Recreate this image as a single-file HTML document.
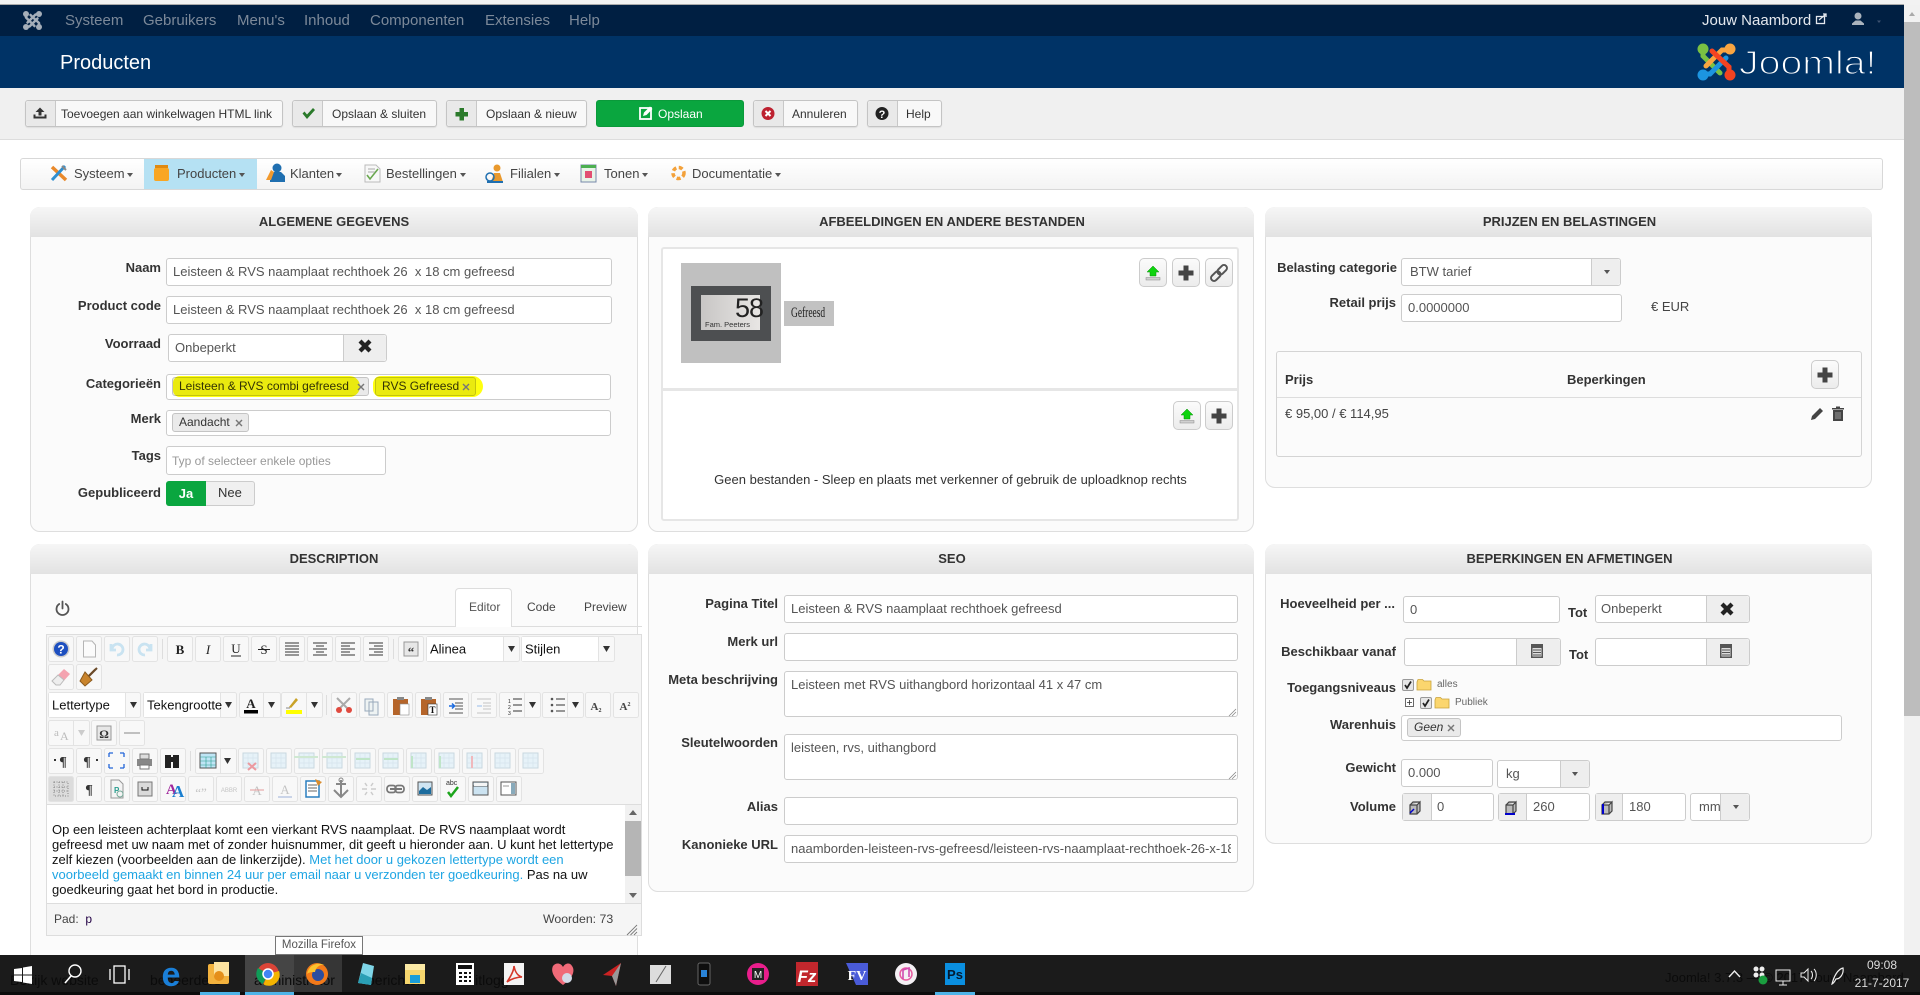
<!DOCTYPE html>
<html lang="nl"><head><meta charset="utf-8"><title>Producten</title>
<style>
html,body{margin:0;padding:0;width:1920px;height:995px;overflow:hidden;background:#fff;font-family:"Liberation Sans",Arial,sans-serif;color:#333}
#w{position:relative;width:1920px;height:995px;overflow:hidden}
.a,.t,.l,.i,.p,.b,.h,.chip{position:absolute;box-sizing:border-box}
.t,.l{white-space:pre;line-height:16px}
.l{font-weight:bold;font-size:13px;color:#333;text-align:right}
.i{background:#fff;border:1px solid #ccc;border-radius:3px}
.it{font-size:13px;color:#555;margin-top:1px}
.p{background:#fbfbfb;border:1.5px solid #dedede;border-radius:10px}
.h{left:-1px;right:-1px;top:-1px;height:30px;background:linear-gradient(#f6f6f6,#e2e2e2);border-radius:10px 10px 0 0;text-align:center;font-weight:bold;font-size:13px;line-height:29px;color:#333}
.sh{padding-left:2px}
.b{background:#f8f8f8;border:1px solid #c4c4c4;border-radius:3px;box-shadow:0 1px 1px rgba(0,0,0,.08)}
.s{position:absolute;top:0;bottom:0;left:0;background:#e9e9e9;border-right:1px solid #c8c8c8;border-radius:3px 0 0 3px}
.bt{font-size:12px;color:#333}
.tm{font-size:15px;color:#7c8999}
.m{font-size:13px;color:#444}
.ca{position:absolute;width:0;height:0;border-left:3px solid transparent;border-right:3px solid transparent;border-top:4px solid #555}
.ad{position:absolute;background:#eee;border-left:1px solid #ccc;top:0;bottom:0;right:0;border-radius:0 3px 3px 0}
.chip{background:#eaeaea;border:1px solid #c4c4c4;border-radius:3px;font-size:12px;line-height:17px;color:#333;padding-left:6px;white-space:pre}
.ib{position:absolute;background:linear-gradient(#fbfbfb,#ececec);border:1px solid #ccc;border-radius:5px;box-sizing:border-box;width:28px;height:29px}
.yl{position:absolute;background:#ffff10;mix-blend-mode:multiply}
svg{position:absolute;left:0;top:0;overflow:visible}
.gh{font-size:14px;color:#0b0b0b}
</style></head><body><div id="w">

<!-- top -->
<div class="a" style="left:0;top:0;width:1920px;height:5px;background:#f2f2f2"></div>
<div class="a" style="left:0;top:4px;width:1904px;height:32px;background:#001f42;border-top:1px solid #aaa"></div>
<div class="a" style="left:0;top:36px;width:1904px;height:52px;background:#003366"></div>
<div class="a" style="left:0;top:88px;width:1904px;height:52px;background:#f0f0f0;border-bottom:1px solid #ddd"></div>

<div class="t tm" style="left:65px;top:12px;margin-top:1px">Systeem</div>
<div class="t tm" style="left:143px;top:12px;margin-top:1px">Gebruikers</div>
<div class="t tm" style="left:237px;top:12px;margin-top:1px">Menu's</div>
<div class="t tm" style="left:304px;top:12px;margin-top:1px">Inhoud</div>
<div class="t tm" style="left:370px;top:12px;margin-top:1px">Componenten</div>
<div class="t tm" style="left:485px;top:12px;margin-top:1px">Extensies</div>
<div class="t tm" style="left:569px;top:12px;margin-top:1px">Help</div>
<div class="t" style="left:1702px;top:13px;font-size:15px;color:#e4e8ee">Jouw Naambord</div>
<div class="t" style="left:60px;top:54px;font-size:20px;color:#fff;line-height:18px">Producten</div>

<!-- toolbar -->
<div class="b" style="left:25px;top:100px;width:258px;height:27px"><div class="s" style="width:29px"></div></div>
<div class="t bt" style="left:61px;top:106px">Toevoegen aan winkelwagen HTML link</div>
<div class="b" style="left:292px;top:100px;width:145px;height:27px"><div class="s" style="width:29px"></div></div>
<div class="t bt" style="left:332px;top:106px">Opslaan &amp; sluiten</div>
<div class="b" style="left:446px;top:100px;width:141px;height:27px"><div class="s" style="width:29px"></div></div>
<div class="t bt" style="left:486px;top:106px">Opslaan &amp; nieuw</div>
<div class="a" style="left:596px;top:100px;width:148px;height:27px;background:#0aa63f;border:1px solid #0a9a3a;border-radius:3px"></div>
<div class="t bt" style="left:658px;top:106px;color:#fff">Opslaan</div>
<div class="b" style="left:753px;top:100px;width:105px;height:27px"><div class="s" style="width:29px"></div></div>
<div class="t bt" style="left:792px;top:106px">Annuleren</div>
<div class="b" style="left:867px;top:100px;width:75px;height:27px"><div class="s" style="width:29px"></div></div>
<div class="t bt" style="left:906px;top:106px">Help</div>

<!-- menu -->
<div class="a" style="left:20px;top:158px;width:1863px;height:32px;background:linear-gradient(#fff,#f3f3f3);border:1px solid #d8d8d8;border-radius:3px"></div>
<div class="a" style="left:144px;top:159px;width:113px;height:30px;background:#b5e1f3"></div>
<div class="t m" style="left:74px;top:166px">Systeem</div><div class="ca" style="left:127px;top:173px"></div>
<div class="t m" style="left:177px;top:166px">Producten</div><div class="ca" style="left:239px;top:173px"></div>
<div class="t m" style="left:290px;top:166px">Klanten</div><div class="ca" style="left:336px;top:173px"></div>
<div class="t m" style="left:386px;top:166px">Bestellingen</div><div class="ca" style="left:460px;top:173px"></div>
<div class="t m" style="left:510px;top:166px">Filialen</div><div class="ca" style="left:554px;top:173px"></div>
<div class="t m" style="left:604px;top:166px">Tonen</div><div class="ca" style="left:642px;top:173px"></div>
<div class="t m" style="left:692px;top:166px">Documentatie</div><div class="ca" style="left:775px;top:173px"></div>

<!-- panel 1 -->
<div class="p" style="left:30px;top:207px;width:608px;height:325px"><div class="h">ALGEMENE GEGEVENS</div></div>
<div class="l" style="right:1759px;top:260px">Naam</div>
<div class="i" style="left:166px;top:258px;width:446px;height:28px"></div>
<div class="t it" style="left:173px;top:263px">Leisteen &amp; RVS naamplaat rechthoek 26  x 18 cm gefreesd</div>
<div class="l" style="right:1759px;top:298px">Product code</div>
<div class="i" style="left:166px;top:296px;width:446px;height:28px"></div>
<div class="t it" style="left:173px;top:301px">Leisteen &amp; RVS naamplaat rechthoek 26  x 18 cm gefreesd</div>
<div class="l" style="right:1759px;top:336px">Voorraad</div>
<div class="i" style="left:168px;top:334px;width:219px;height:28px"><div class="ad" style="width:42px"></div></div>
<div class="t it" style="left:175px;top:339px">Onbeperkt</div>
<div class="l" style="right:1759px;top:376px">Categorieën</div>
<div class="i" style="left:166px;top:374px;width:445px;height:26px"></div>
<div class="chip" style="left:172px;top:377px;width:197px;height:19px">Leisteen &amp; RVS combi gefreesd</div>
<div class="chip" style="left:375px;top:377px;width:101px;height:19px">RVS Gefreesd</div>
<div class="yl" style="left:173px;top:376px;width:187px;height:21px;border-radius:9px 14px 14px 9px"></div>
<div class="yl" style="left:373px;top:376px;width:110px;height:21px;border-radius:9px 12px 12px 9px"></div>
<div class="l" style="right:1759px;top:411px">Merk</div>
<div class="i" style="left:166px;top:410px;width:445px;height:26px"></div>
<div class="chip" style="left:172px;top:413px;width:77px;height:19px">Aandacht</div>
<div class="l" style="right:1759px;top:448px">Tags</div>
<div class="i" style="left:166px;top:446px;width:220px;height:29px"></div>
<div class="t" style="left:172px;top:453px;font-size:12px;color:#999">Typ of selecteer enkele opties</div>
<div class="l" style="right:1759px;top:485px">Gepubliceerd</div>
<div class="a" style="left:166px;top:481px;width:89px;height:25px;background:#f0f0f0;border:1px solid #ccc;border-radius:3px"></div>
<div class="a" style="left:166px;top:481px;width:40px;height:25px;background:#0aa63f;border-radius:3px 0 0 3px;color:#fff;font-weight:bold;font-size:13px;line-height:25px;text-align:center">Ja</div>
<div class="t" style="left:218px;top:485px;font-size:13px">Nee</div>

<!-- panel 2 -->
<div class="p" style="left:648px;top:207px;width:606px;height:325px"><div class="h sh">AFBEELDINGEN EN ANDERE BESTANDEN</div></div>
<div class="a" style="left:661px;top:247px;width:578px;height:274px;background:#fff;border:2px solid #e6e6e6;border-radius:3px"></div>
<div class="a" style="left:662px;top:388px;width:576px;height:3px;background:#e6e6e6"></div>
<div class="a" style="left:681px;top:263px;width:100px;height:100px;background:#c0c0c0"></div>
<div class="a" style="left:691px;top:286px;width:80px;height:55px;background:#4d4f51"></div>
<div class="a" style="left:701px;top:295px;width:59px;height:35px;background:linear-gradient(90deg,#c8c6c5,#e8e6e4)"></div>
<div class="t" style="left:735px;top:297px;font-size:27px;line-height:22px;color:#222;letter-spacing:-1px">58</div>
<div class="t" style="left:705px;top:320px;font-size:7.5px;line-height:10px;color:#333">Fam. Peeters</div>
<div class="a" style="left:784px;top:301px;width:50px;height:25px;background:#c2c2c2"></div>
<div class="t" style="left:791px;top:305px;font-size:15px;font-family:'Liberation Serif',serif;line-height:16px;color:#222;transform:scaleX(.63);transform-origin:left">Gefreesd</div>
<div class="ib" style="left:1139px;top:258px"></div><div class="ib" style="left:1172px;top:258px"></div><div class="ib" style="left:1205px;top:258px"></div>
<div class="ib" style="left:1173px;top:401px"></div><div class="ib" style="left:1205px;top:401px"></div>
<div class="t" style="left:714px;top:472px;font-size:13px;color:#333;width:473px;text-align:center">Geen bestanden - Sleep en plaats met verkenner of gebruik de uploadknop rechts</div>

<!-- panel 3 -->
<div class="p" style="left:1265px;top:207px;width:607px;height:281px"><div class="h sh">PRIJZEN EN BELASTINGEN</div></div>
<div class="l" style="right:523px;top:260px">Belasting categorie</div>
<div class="i" style="left:1401px;top:258px;width:220px;height:28px"><div class="ad" style="width:28px"></div></div>
<div class="t it" style="left:1410px;top:263px">BTW tarief</div><div class="ca" style="left:1604px;top:270px"></div>
<div class="l" style="right:524px;top:295px">Retail prijs</div>
<div class="i" style="left:1401px;top:294px;width:221px;height:28px"></div>
<div class="t it" style="left:1408px;top:299px">0.0000000</div>
<div class="t" style="left:1651px;top:299px;font-size:13px;color:#444">€ EUR</div>
<div class="a" style="left:1276px;top:351px;width:586px;height:106px;border:1px solid #d4d4d4;border-radius:3px"></div>
<div class="a" style="left:1277px;top:397px;width:584px;height:1px;background:#ddd"></div>
<div class="t" style="left:1285px;top:372px;font-size:13px;font-weight:bold">Prijs</div>
<div class="t" style="left:1567px;top:372px;font-size:13px;font-weight:bold">Beperkingen</div>
<div class="ib" style="left:1811px;top:360px"></div>
<div class="t" style="left:1285px;top:406px;font-size:13px;color:#444">€ 95,00 / € 114,95</div>

<!-- panel 4 -->
<div class="p" style="left:30px;top:544px;width:608px;height:440px"><div class="h">DESCRIPTION</div></div>
<div class="a" style="left:46px;top:626px;width:596px;height:1px;background:#ddd"></div>
<div class="a" style="left:455px;top:588px;width:57px;height:39px;background:#fff;border:1px solid #ddd;border-bottom:0;border-radius:4px 4px 0 0"></div>
<div class="t" style="left:469px;top:599px;font-size:12px;color:#555">Editor</div>
<div class="t" style="left:527px;top:599px;font-size:12px;color:#444">Code</div>
<div class="t" style="left:584px;top:599px;font-size:12px;color:#444">Preview</div>
<div class="a" style="left:46px;top:634px;width:596px;height:302px;background:#f5f5f5;border:1px solid #ddd"></div>
<div class="a" style="left:47px;top:804px;width:594px;height:100px;background:#fff;border-top:1px solid #ddd;border-bottom:1px solid #ddd"></div>
<div class="a" style="left:625px;top:805px;width:16px;height:98px;background:#f1f1f1"></div>
<div class="a" style="left:625px;top:821px;width:16px;height:55px;background:#b5b5b5"></div>
<div class="t" style="left:52px;top:822px;font-size:13px;color:#111">Op een leisteen achterplaat komt een vierkant RVS naamplaat. De RVS naamplaat wordt</div>
<div class="t" style="left:52px;top:837px;font-size:13px;color:#111">gefreesd met uw naam met of zonder huisnummer, dit geeft u hieronder aan. U kunt het lettertype</div>
<div class="t" style="left:52px;top:852px;font-size:13px;color:#111">zelf kiezen (voorbeelden aan de linkerzijde). <span style="color:#1ea5e3">Met het door u gekozen lettertype wordt een</span></div>
<div class="t" style="left:52px;top:867px;font-size:13px;color:#1ea5e3">voorbeeld gemaakt en binnen 24 uur per email naar u verzonden ter goedkeuring. <span style="color:#111">Pas na uw</span></div>
<div class="t" style="left:52px;top:882px;font-size:13px;color:#111">goedkeuring gaat het bord in productie.</div>
<div class="t" style="left:54px;top:911px;font-size:12px;color:#444">Pad:  <span style="color:#204">p</span></div>
<div class="t" style="left:543px;top:911px;font-size:12.300px;color:#444">Woorden: 73</div>

<!-- panel 5 -->
<div class="p" style="left:648px;top:544px;width:606px;height:348px"><div class="h sh">SEO</div></div>
<div class="l" style="right:1142px;top:596px">Pagina Titel</div>
<div class="i" style="left:784px;top:595px;width:454px;height:28px"></div>
<div class="t it" style="left:791px;top:600px">Leisteen &amp; RVS naamplaat rechthoek gefreesd</div>
<div class="l" style="right:1142px;top:634px">Merk url</div>
<div class="i" style="left:784px;top:633px;width:454px;height:28px"></div>
<div class="l" style="right:1142px;top:672px">Meta beschrijving</div>
<div class="i" style="left:784px;top:671px;width:454px;height:46px"></div>
<div class="t it" style="left:791px;top:676px">Leisteen met RVS uithangbord horizontaal 41 x 47 cm</div>
<div class="l" style="right:1142px;top:735px">Sleutelwoorden</div>
<div class="i" style="left:784px;top:734px;width:454px;height:46px"></div>
<div class="t it" style="left:791px;top:739px">leisteen, rvs, uithangbord</div>
<div class="l" style="right:1142px;top:799px">Alias</div>
<div class="i" style="left:784px;top:797px;width:454px;height:28px"></div>
<div class="l" style="right:1142px;top:837px">Kanonieke URL</div>
<div class="i" style="left:784px;top:835px;width:454px;height:28px"></div>
<div class="t it" style="left:791px;top:840px;width:440px;overflow:hidden">naamborden-leisteen-rvs-gefreesd/leisteen-rvs-naamplaat-rechthoek-26-x-18-cm</div>

<!-- panel 6 -->
<div class="p" style="left:1265px;top:544px;width:607px;height:300px"><div class="h sh">BEPERKINGEN EN AFMETINGEN</div></div>
<div class="l" style="right:525px;top:596px">Hoeveelheid per ...</div>
<div class="i" style="left:1403px;top:596px;width:157px;height:27px"></div>
<div class="t it" style="left:1410px;top:601px">0</div>
<div class="t" style="left:1568px;top:605px;font-size:13px;font-weight:bold">Tot</div>
<div class="i" style="left:1595px;top:595px;width:155px;height:28px"><div class="ad" style="width:42px"></div></div>
<div class="t it" style="left:1601px;top:600px">Onbeperkt</div>
<div class="l" style="right:524px;top:644px">Beschikbaar vanaf</div>
<div class="i" style="left:1404px;top:638px;width:157px;height:28px"><div class="ad" style="width:43px"></div></div>
<div class="t" style="left:1569px;top:647px;font-size:13px;font-weight:bold">Tot</div>
<div class="i" style="left:1595px;top:638px;width:155px;height:28px"><div class="ad" style="width:42px"></div></div>
<div class="l" style="right:524px;top:680px">Toegangsniveaus</div>
<div class="t" style="left:1437px;top:677px;font-size:10px;color:#666">alles</div>
<div class="t" style="left:1455px;top:695px;font-size:10px;color:#666">Publiek</div>
<div class="l" style="right:524px;top:717px">Warenhuis</div>
<div class="i" style="left:1401px;top:715px;width:441px;height:26px"></div>
<div class="chip" style="left:1407px;top:718px;width:54px;height:19px;font-style:italic">Geen</div>
<div class="l" style="right:524px;top:760px">Gewicht</div>
<div class="i" style="left:1401px;top:759px;width:92px;height:28px"></div>
<div class="t it" style="left:1408px;top:764px">0.000</div>
<div class="i" style="left:1497px;top:760px;width:93px;height:28px"><div class="ad" style="width:28px"></div></div>
<div class="t it" style="left:1506px;top:765px">kg</div><div class="ca" style="left:1572px;top:772px"></div>
<div class="l" style="right:524px;top:799px">Volume</div>
<div class="i" style="left:1402px;top:793px;width:92px;height:28px"><div class="a" style="left:0;top:0;bottom:0;width:29px;background:#eee;border-right:1px solid #ccc"></div></div>
<div class="t it" style="left:1437px;top:798px">0</div>
<div class="i" style="left:1498px;top:793px;width:92px;height:28px"><div class="a" style="left:0;top:0;bottom:0;width:28px;background:#eee;border-right:1px solid #ccc"></div></div>
<div class="t it" style="left:1533px;top:798px">260</div>
<div class="i" style="left:1595px;top:793px;width:91px;height:28px"><div class="a" style="left:0;top:0;bottom:0;width:27px;background:#eee;border-right:1px solid #ccc"></div></div>
<div class="t it" style="left:1629px;top:798px">180</div>
<div class="i" style="left:1690px;top:793px;width:60px;height:28px"><div class="ad" style="width:28px"></div></div>
<div class="t it" style="left:1699px;top:798px">mm</div><div class="ca" style="left:1733px;top:805px"></div>

<!-- page-level icons -->
<svg width="1920" height="995" viewBox="0 0 1920 995">
<defs>
<g id="jl" fill="none" stroke-width="5" stroke-linecap="round" stroke-linejoin="round">
<path d="M6 7V13L23 30"/><path d="M32 7H25L9 23"/><path d="M32 31V24L15 8"/><path d="M6 31H13L29 15"/>
</g>
<g id="pl"><path d="M-7.500-2.500H-2.500V-7.500H2.500V-2.500H7.500V2.500H2.500V7.500H-2.500V2.500H-7.500Z" fill="#444"/></g>
<g id="up"><path d="M0-7L6-1H3V3H-3V-1H-6Z" fill="#0dd40d" stroke="#0a8a0a" stroke-width=".5"/><rect x="-7" y="4.500" width="14" height="2.500" fill="#d0d0d0" stroke="#888" stroke-width=".5"/></g>
<path id="xx" d="M-6.500-3.500L-3.500-6.500L0-3L3.500-6.500L6.500-3.500L3 0L6.500 3.500L3.500 6.500L0 3L-3.500 6.500L-6.500 3.500L-3 0Z" fill="#222"/>
<path id="xs" d="M-3.500-2.500L-2.500-3.500L0-1L2.500-3.500L3.500-2.500L1 0L3.500 2.500L2.500 3.500L0 1L-2.500 3.500L-3.500 2.500L-1 0Z" fill="#777"/>
<g id="cal"><rect x="-6" y="-7" width="12" height="14" fill="#555"/><rect x="-4.500" y="-3" width="9" height="8.500" fill="#ddd"/><path d="M-4-1H4M-4 1.500H4M-4 4H4" stroke="#555" stroke-width="1"/></g>
<g id="fd"><path d="M-7-3V5H7V-4H0L-1.500-5.500H-6Z" fill="#fbd66e" stroke="#c9a33c" stroke-width=".8"/></g>
<g id="cb"><rect x="-5.500" y="-5.500" width="11" height="11" rx="1.500" fill="#e6e6e6" stroke="#999"/><path d="M-3 0L-1 3L3-3.500" fill="none" stroke="#222" stroke-width="1.700"/></g>
<g id="bx"><path d="M-5-3H2L5-6V3L2 6H-5ZM-5-3L-2-6H5M2-3V6" fill="#bbb" stroke="#444" stroke-width="1.200"/></g>
<g id="pt"><rect x="5" y="5" width="15" height="15" fill="#e6f2f8" stroke="#c9d8e0"/><path d="M5 10H20M5 15H20M10 5V20M15 5V20" stroke="#d6e4ec" stroke-width=".7"/></g>
</defs>

<!-- top marks -->
<g transform="translate(23,11) scale(.5)"><use href="#jl" stroke="#a5aeb9"/><g fill="#a5aeb9"><circle cx="6" cy="6" r="6"/><circle cx="32" cy="6" r="6"/><circle cx="6" cy="32" r="6"/><circle cx="32" cy="32" r="6"/></g></g>
<rect x="1816.500" y="16.500" width="8" height="7" fill="none" stroke="#e4e8ee" stroke-width="1.300"/><path d="M1819 20L1826 14M1823 14H1826V17" stroke="#e4e8ee" stroke-width="1.300" fill="none"/>
<g fill="#aab3bd"><circle cx="1858" cy="16" r="3.500"/><path d="M1852 25V23.500L1855.500 20.500H1860.500L1864 23.500V25Z"/></g>
<path d="M1877 20.500h4l-2 2.500z" fill="#3d5270"/>

<g transform="translate(1697,43)">
<path d="M6 7V13L23 30" fill="none" stroke="#7ac143" stroke-width="5" stroke-linecap="round"/><circle cx="6" cy="6" r="5.500" fill="#7ac143"/>
<path d="M6 31H13L29 15" fill="none" stroke="#1c95e0" stroke-width="5" stroke-linecap="round"/><circle cx="6" cy="32" r="5.500" fill="#1c95e0"/>
<path d="M32 7H25L9 23" fill="none" stroke="#f9a541" stroke-width="5" stroke-linecap="round"/><circle cx="33" cy="6" r="5.500" fill="#f9a541"/>
<path d="M32 31V24L15 8" fill="none" stroke="#f44321" stroke-width="5" stroke-linecap="round"/><circle cx="33" cy="32" r="5.500" fill="#f44321"/>
</g>
<text x="1739" y="74" font-size="33" fill="#fff" stroke="#003366" stroke-width="1.300" transform="translate(1739,0) scale(1.19,1) translate(-1739,0)" font-family="Liberation Sans">Joomla!</text>

<!-- toolbar icons -->
<path d="M40 107.500L44.500 112H41.500V115.500H38.500V112H35.500ZM33.500 114.500H35.500V116.500H44.500V114.500H46.500V118.500H33.500Z" fill="#333"/>
<path d="M302.500 113.500L304.500 111.500L307 114.500L313 108L315 110L307 119Z" fill="#2b7a2b"/>
<path d="M459.500 108H464V112H468V116.500H464V120.500H459.500V116.500H455.500V112H459.500Z" fill="#2b7a2b"/>
<g><rect x="640" y="108" width="11" height="11" fill="none" stroke="#fff" stroke-width="1.800"/><path d="M643 116L644 112.500L650 106.500L652.500 109L646.500 115Z" fill="#fff"/></g>
<circle cx="768" cy="113.500" r="6.500" fill="#bd2130"/><path d="M765.500 111L770.500 116M770.500 111L765.500 116" stroke="#fff" stroke-width="2"/>
<circle cx="882" cy="113.500" r="6.500" fill="#222"/><text x="882" y="118" font-size="11" font-weight="bold" fill="#fff" text-anchor="middle">?</text>

<!-- menu icons -->
<path d="M52 167L66 180" stroke="#e9892b" stroke-width="3.500"/><path d="M65 166L52 180" stroke="#2e8fd0" stroke-width="3"/><path d="M62 166L66 170" stroke="#888" stroke-width="2"/>
<rect x="154" y="168" width="15" height="13" rx="2" fill="#f9a623"/><rect x="155" y="165" width="13" height="3" fill="#e08a11"/>
<circle cx="277" cy="168" r="4.500" fill="#1f6fb0"/><path d="M270 182V176L274 172H281L285 176V182Z" fill="#1f6fb0"/><path d="M266 180L271 170L274 172L271 180Z" fill="#f29a2e"/>
<path d="M365 165H376L380 169V182H365Z" fill="#f8f8f8" stroke="#bbb"/><path d="M367 175L370 179L378 169" stroke="#6aa84f" stroke-width="1.600" fill="none"/><path d="M368 169H375M368 172H375" stroke="#aaa"/>
<circle cx="497" cy="168" r="3.500" fill="#e9992d"/><path d="M491 182L494 173H500L503 182Z" fill="#e9992d"/><circle cx="490" cy="177" r="4" fill="none" stroke="#1f6fb0" stroke-width="1.500"/><path d="M487 182H503" stroke="#1f6fb0" stroke-width="2"/>
<rect x="581" y="165" width="15" height="17" fill="#e8f3e8" stroke="#78a"/><rect x="581" y="165" width="15" height="3" fill="#4caf50"/><rect x="585" y="171" width="7" height="7" fill="#e24f72"/>
<circle cx="678.500" cy="173" r="5.500" fill="none" stroke="#f3a13a" stroke-width="3.500" stroke-dasharray="4 2.500"/>

<!-- panel 1 extras -->
<use href="#xx" x="365" y="346"/>
<use href="#xs" x="361" y="387"/><use href="#xs" x="466" y="387"/><use href="#xs" x="239" y="423"/>
<!-- panel 2 buttons -->
<use href="#up" x="1153" y="273"/><use href="#pl" x="1186" y="273"/>
<g transform="rotate(-45 1219 273)" fill="none" stroke="#555" stroke-width="2"><rect x="1209" y="270" width="11" height="6" rx="3"/><rect x="1218" y="270" width="11" height="6" rx="3"/></g>
<use href="#up" x="1187" y="416"/><use href="#pl" x="1219" y="416"/>
<!-- panel 3 -->
<use href="#pl" x="1825" y="375"/>
<path d="M1811 420L1812 416L1820 408L1823 411L1815 419Z" fill="#444"/>
<path d="M1833 410H1843V421H1833ZM1832 408H1844V409.500H1832ZM1836 406.500H1840V408H1836Z" fill="#444"/><path d="M1836 412V419M1838 412V419M1840 412V419" stroke="#bbb" stroke-width=".7"/>
<!-- panel 4 -->
<path d="M59.200 604A6 6 0 1 0 65.800 604" fill="none" stroke="#555" stroke-width="1.800" stroke-linecap="round"/><path d="M62.500 601.500V608.500" stroke="#555" stroke-width="1.800" stroke-linecap="round"/>
<path d="M629 815h8l-4-5zM629 893h8l-4 5z" fill="#666"/>
<path d="M627 935L637 925M630.500 935L637 928.500M634 935L637 932" stroke="#777" stroke-width=".9"/>
<!-- seo textarea handles -->
<path d="M1229 716L1236 709M1232 716L1236 712M1229 779L1236 772M1232 779L1236 775" stroke="#888" stroke-width=".8"/>
<!-- panel 6 -->
<use href="#xx" x="1727" y="609"/>
<use href="#cal" x="1537" y="651"/><use href="#cal" x="1726" y="651"/>
<use href="#cb" x="1408" y="685"/><use href="#fd" x="1424" y="685"/>
<rect x="1405.500" y="698.500" width="8" height="8" fill="#fff" stroke="#444" stroke-width=".8"/><path d="M1407 702.500H1412M1409.500 700V705" stroke="#333" stroke-width=".8"/>
<use href="#cb" x="1426" y="703"/><use href="#fd" x="1442" y="703"/>
<use href="#xs" x="1451" y="728"/>
<use href="#bx" x="1415" y="808"/><path d="M1410 813L1414 809" stroke="#00c" stroke-width="1.500"/>
<use href="#bx" x="1511" y="808"/><path d="M1505 814H1515" stroke="#00c" stroke-width="2"/>
<use href="#bx" x="1607" y="808"/><path d="M1603 804V814" stroke="#00c" stroke-width="2"/>

<!-- editor toolbar -->
<g fill="#f8f8f8" stroke="#e3e3e3">
<g id="ebs">
<rect x="48.500" y="636.500" width="25" height="25" rx="2"/><rect x="76.500" y="636.500" width="25" height="25" rx="2"/><rect x="104.500" y="636.500" width="25" height="25" rx="2"/><rect x="132.500" y="636.500" width="25" height="25" rx="2"/>
<rect x="167.500" y="636.500" width="25" height="25" rx="2"/><rect x="195.500" y="636.500" width="25" height="25" rx="2"/><rect x="223.500" y="636.500" width="25" height="25" rx="2"/><rect x="251.500" y="636.500" width="25" height="25" rx="2"/><rect x="279.500" y="636.500" width="25" height="25" rx="2"/><rect x="307.500" y="636.500" width="25" height="25" rx="2"/><rect x="335.500" y="636.500" width="25" height="25" rx="2"/><rect x="363.500" y="636.500" width="25" height="25" rx="2"/>
<rect x="398.500" y="636.500" width="25" height="25" rx="2"/><rect x="426.500" y="636.500" width="93" height="25" rx="2"/><rect x="521.500" y="636.500" width="93" height="25" rx="2"/>
<rect x="48.500" y="664.500" width="25" height="25" rx="2"/><rect x="76.500" y="664.500" width="25" height="25" rx="2"/>
<rect x="48.500" y="692.500" width="92" height="25" rx="2"/><rect x="143.500" y="692.500" width="93" height="25" rx="2"/><rect x="239.500" y="692.500" width="41" height="25" rx="2"/><rect x="281.500" y="692.500" width="41" height="25" rx="2"/>
<rect x="331.500" y="692.500" width="25" height="25" rx="2"/><rect x="359.500" y="692.500" width="25" height="25" rx="2"/><rect x="387.500" y="692.500" width="25" height="25" rx="2"/><rect x="415.500" y="692.500" width="25" height="25" rx="2"/><rect x="443.500" y="692.500" width="25" height="25" rx="2"/><rect x="471.500" y="692.500" width="25" height="25" rx="2"/><rect x="499.500" y="692.500" width="41" height="25" rx="2"/><rect x="542.500" y="692.500" width="41" height="25" rx="2"/><rect x="585.500" y="692.500" width="25" height="25" rx="2"/><rect x="613.500" y="692.500" width="25" height="25" rx="2"/>
<rect x="48.500" y="720.500" width="41" height="25" rx="2"/><rect x="91.500" y="720.500" width="25" height="25" rx="2"/><rect x="119.500" y="720.500" width="25" height="25" rx="2"/>
<rect x="48.500" y="748.500" width="25" height="25" rx="2"/><rect x="76.500" y="748.500" width="25" height="25" rx="2"/><rect x="104.500" y="748.500" width="25" height="25" rx="2"/><rect x="132.500" y="748.500" width="25" height="25" rx="2"/><rect x="160.500" y="748.500" width="25" height="25" rx="2"/><rect x="195.500" y="748.500" width="41" height="25" rx="2"/>
<rect x="238.500" y="748.500" width="25" height="25" rx="2"/><rect x="266.500" y="748.500" width="25" height="25" rx="2"/><rect x="294.500" y="748.500" width="25" height="25" rx="2"/><rect x="322.500" y="748.500" width="25" height="25" rx="2"/><rect x="350.500" y="748.500" width="25" height="25" rx="2"/><rect x="378.500" y="748.500" width="25" height="25" rx="2"/><rect x="406.500" y="748.500" width="25" height="25" rx="2"/><rect x="434.500" y="748.500" width="25" height="25" rx="2"/><rect x="462.500" y="748.500" width="25" height="25" rx="2"/><rect x="490.500" y="748.500" width="25" height="25" rx="2"/><rect x="518.500" y="748.500" width="25" height="25" rx="2"/>
<rect x="48.500" y="776.500" width="25" height="25" rx="2" fill="#dcdcdc"/><rect x="76.500" y="776.500" width="25" height="25" rx="2"/><rect x="104.500" y="776.500" width="25" height="25" rx="2"/><rect x="132.500" y="776.500" width="25" height="25" rx="2"/><rect x="160.500" y="776.500" width="25" height="25" rx="2"/><rect x="188.500" y="776.500" width="25" height="25" rx="2"/><rect x="216.500" y="776.500" width="25" height="25" rx="2"/><rect x="244.500" y="776.500" width="25" height="25" rx="2"/><rect x="272.500" y="776.500" width="25" height="25" rx="2"/><rect x="300.500" y="776.500" width="25" height="25" rx="2"/><rect x="328.500" y="776.500" width="25" height="25" rx="2"/><rect x="356.500" y="776.500" width="25" height="25" rx="2"/><rect x="384.500" y="776.500" width="25" height="25" rx="2"/><rect x="412.500" y="776.500" width="25" height="25" rx="2"/><rect x="440.500" y="776.500" width="25" height="25" rx="2"/><rect x="468.500" y="776.500" width="25" height="25" rx="2"/><rect x="496.500" y="776.500" width="25" height="25" rx="2"/>
</g></g>
<!-- white select fields -->
<g fill="#fff"><rect x="427" y="637" width="76" height="24"/><rect x="522" y="637" width="76" height="24"/><rect x="49" y="693" width="76" height="24"/><rect x="144" y="693" width="76" height="24"/></g>
<g stroke="#e3e3e3"><path d="M503.500 637V661M598.500 637V661M125.500 693V717M220.500 693V717M263.500 693V717M306.500 693V717M524.500 693V717M567.500 693V717M73.500 721V745M220.500 749V773"/></g>
<path d="M162.500 639V659M393.500 639V659M326.500 695V715M190.500 751V771" stroke="#ddd"/>
<g font-family="Liberation Sans" font-size="13" fill="#111"><text x="430" y="653.500">Alinea</text><text x="525" y="653.500">Stijlen</text><text x="52" y="709.500">Lettertype</text><text x="147" y="709.500">Tekengrootte</text></g>
<g fill="#333"><path d="M508 646h7l-3.500 6zM603 646h7l-3.500 6zM130 702h7l-3.500 6zM225 702h7l-3.500 6zM268 702h7l-3.500 6zM311 702h7l-3.500 6zM529 702h7l-3.500 6zM572 702h7l-3.500 6zM224 758h7l-3.500 6z"/><path d="M78 730h7l-3.500 6z" fill="#ccc"/></g>
<!-- row1 -->
<circle cx="61" cy="649" r="8.500" fill="#ccc"/><circle cx="61" cy="649" r="7" fill="#1d4fc0"/><text x="61" y="653.500" font-size="12" font-weight="bold" fill="#fff" text-anchor="middle" font-family="Liberation Sans">?</text>
<path d="M83.500 641H92L95.500 645V657H83.500Z" fill="#fbfbfb" stroke="#b5b5b5"/>
<path d="M112 649A5.500 5.500 0 1 1 117 655M111 644V650H116" fill="none" stroke="#c9e3f1" stroke-width="2.800"/>
<path d="M150 649A5.500 5.500 0 1 0 145 655M151 644V650H146" fill="none" stroke="#c9e3f1" stroke-width="2.800"/>
<g font-family="Liberation Serif" font-size="13" fill="#222" text-anchor="middle"><text x="180" y="654" font-weight="bold">B</text><text x="208" y="654" font-style="italic">I</text><text x="236" y="653">U</text><text x="264" y="654">S</text></g>
<path d="M231 656H241M258 649.500H270" stroke="#222"/>
<path d="M285 643H299M285 646H299M285 649H299M285 652H299M285 655H299M313 643H327M316 646H324M313 649H327M316 652H324M313 655H327M341 643H355M341 646H350M341 649H355M341 652H350M341 655H355M369 643H383M374 646H383M369 649H383M374 652H383M369 655H383" stroke="#333" stroke-width="1"/>
<rect x="404" y="642" width="14" height="14" fill="#e7e7e7" stroke="#999"/><text x="411" y="656" font-size="13" font-weight="bold" text-anchor="middle" fill="#333" font-family="Liberation Serif">“</text>
<!-- row2 -->
<path d="M52 681L64 669L70 674L60 685H56Z" fill="#f4a3b0"/><path d="M52 681L58 675L64 680L60 685H56Z" fill="#eee" stroke="#bbb"/>
<path d="M95 669L88 676M85 672L92 680L85 686L80 681Z" fill="#c9842c" stroke="#8b5a1d"/><path d="M97 668L89 676" stroke="#6a4a2a" stroke-width="2"/>
<!-- row3 -->
<text x="251" y="708" font-family="Liberation Serif" font-size="13" font-weight="bold" text-anchor="middle" fill="#222">A</text><rect x="244" y="710" width="14" height="3.500" fill="#000"/>
<path d="M289 707L296 698L298 700L291 708Z" fill="#c9a227"/><path d="M286 708H290" stroke="#888"/><rect x="286" y="710" width="16" height="4" fill="#ff0"/>
<path d="M337 698L350 711M350 698L337 711" stroke="#aaa" stroke-width="2"/><circle cx="339" cy="710" r="3" fill="#e04a3f"/><circle cx="349" cy="710" r="3" fill="#e04a3f"/>
<path d="M365 699H373V711H365ZM369 702H378V715H369Z" fill="#eef3f3" stroke="#9ab"/>
<path d="M393 699H408V715H393Z" fill="#b5652a"/><rect x="397" y="697" width="7" height="3" fill="#888"/><rect x="400" y="704" width="9" height="11" fill="#fff" stroke="#8a8a8a" stroke-width=".6"/>
<path d="M421 699H436V715H421Z" fill="#b5652a"/><rect x="425" y="697" width="7" height="3" fill="#888"/><rect x="428" y="704" width="9" height="11" fill="#fff" stroke="#333" stroke-width=".6"/><text x="432.500" y="713" font-size="9" font-weight="bold" text-anchor="middle" fill="#111" font-family="Liberation Serif">T</text>
<path d="M449 699H463M455 703H463M455 706H463M455 709H463M449 713H463" stroke="#555"/><path d="M449 706H454M452 703.500L454.500 706L452 708.500" stroke="#1a6be0" fill="none" stroke-width="1.500"/>
<path d="M477 699H491M483 703H491M483 706H491M483 709H491M477 713H491" stroke="#c4c4c4"/><path d="M477 706H482" stroke="#b8d0ef" stroke-width="1.500"/>
<path d="M513 699H522M513 705H522M513 711H522" stroke="#333"/><text x="508" y="703" font-size="5" fill="#222">1</text><text x="508" y="709" font-size="5" fill="#222">2</text><text x="508" y="715" font-size="5" fill="#222">3</text>
<path d="M556 699H565M556 705H565M556 711H565" stroke="#333"/><circle cx="552" cy="699" r="1.300" fill="#555"/><circle cx="552" cy="705" r="1.300" fill="#555"/><circle cx="552" cy="711" r="1.300" fill="#555"/>
<text x="596" y="710" font-family="Liberation Serif" font-size="11" font-weight="bold" text-anchor="middle" fill="#444">A<tspan font-size="6" dy="2">2</tspan></text>
<text x="625" y="710" font-family="Liberation Serif" font-size="11" font-weight="bold" text-anchor="middle" fill="#444">A<tspan font-size="6" dy="-4">2</tspan></text>
<!-- row4 -->
<text x="54" y="736" font-family="Liberation Serif" font-size="11" fill="#bbb">a</text><text x="60" y="740" font-family="Liberation Serif" font-size="12" fill="#bbb">A</text>
<rect x="97" y="726" width="14" height="14" fill="#e7e7e7" stroke="#999"/><text x="104" y="738" font-size="12" font-weight="bold" text-anchor="middle" fill="#333" font-family="Liberation Serif">Ω</text>
<path d="M124 733H140" stroke="#888"/>
<!-- row5 -->
<g font-family="Liberation Serif" font-size="14" font-weight="bold" fill="#333" text-anchor="middle"><text x="63" y="766">¶</text><text x="87" y="766">¶</text></g>
<path d="M54 760h2M96 760h2" stroke="#333" stroke-width="2"/>
<rect x="109" y="753" width="15" height="15" fill="none" stroke="#2264d8" stroke-width="1.300" stroke-dasharray="4 7 4 0"/>
<rect x="137" y="759" width="15" height="7" fill="#888"/><rect x="140" y="754" width="9" height="5" fill="#ddd" stroke="#777"/><rect x="140" y="765" width="9" height="4" fill="#fff" stroke="#777"/>
<path d="M165 755H171V768H165ZM173 755H179V768H173ZM170 757H174V762H170Z" fill="#222"/>
<rect x="200" y="753" width="16" height="15" fill="#bfe5f5" stroke="#555"/><path d="M200 757H216M200 761H216M200 765H216M206 757V768M211 757V768" stroke="#2a9d8f" stroke-width=".6"/>
<use href="#pt" x="238" y="748"/><use href="#pt" x="266" y="748"/><use href="#pt" x="294" y="748"/><use href="#pt" x="322" y="748"/><use href="#pt" x="350" y="748"/><use href="#pt" x="378" y="748"/><use href="#pt" x="406" y="748"/><use href="#pt" x="434" y="748"/><use href="#pt" x="462" y="748"/><use href="#pt" x="490" y="748"/><use href="#pt" x="518" y="748"/>
<path d="M248 763L256 770M256 763L248 770" stroke="#ec9aa0" stroke-width="2"/>
<path d="M294 757H318M322 757H346" stroke="#cfe8d2" stroke-width="2"/><path d="M356 759H370M384 759H398" stroke="#bfe5c8" stroke-width="2"/><path d="M412 756V768M440 756V768" stroke="#bfe5c8" stroke-width="2"/><path d="M472 756V768" stroke="#f0b8bc" stroke-width="2"/>
<!-- row6 -->
<rect x="54" y="782" width="14" height="14" fill="none" stroke="#888" stroke-dasharray="1 1.500"/><path d="M54 787H68M54 791H68M59 782V796M63 782V796" stroke="#888" stroke-dasharray="1 1.500"/>
<text x="89" y="794" font-family="Liberation Serif" font-size="14" font-weight="bold" fill="#333" text-anchor="middle">¶</text>
<path d="M111 780H119L123 784V798H111Z" fill="#f4f4f4" stroke="#999"/><text x="114" y="793" font-size="8" fill="#2a9d8f" font-weight="bold">P</text><circle cx="120" cy="794" r="3" fill="none" stroke="#7a9"/>
<rect x="138" y="782" width="14" height="14" fill="#dadada" stroke="#777"/><path d="M142 787v3h6v-3" fill="none" stroke="#111"/>
<text x="166" y="794" font-family="Liberation Serif" font-size="15" font-weight="bold" fill="#a0289c">A</text><text x="172" y="797" font-family="Liberation Serif" font-size="17" font-weight="bold" fill="#1a7fd0">A</text>
<text x="201" y="797" font-family="Liberation Serif" font-size="13" fill="#c4c4c4" text-anchor="middle">“”</text>
<text x="229" y="792" font-family="Liberation Sans" font-size="6" fill="#c4c4c4" text-anchor="middle">ABBR</text>
<text x="257" y="795" font-family="Liberation Serif" font-size="13" fill="#c4c4c4" text-anchor="middle">A</text><path d="M250 790H264" stroke="#e39a9a"/>
<text x="285" y="794" font-family="Liberation Serif" font-size="13" fill="#c4c4c4" text-anchor="middle">A</text><path d="M278 797H292" stroke="#9bb0d9"/>
<rect x="306" y="781" width="13" height="16" fill="#fff" stroke="#2a7fbf" stroke-width="1.500"/><path d="M308 785H317M308 788H317M308 791H317" stroke="#666"/><path d="M315 779L322 782L318 786Z" fill="#d98c2e"/>
<path d="M341 780V796M336 784H346M334 790L341 797L348 790" fill="none" stroke="#888" stroke-width="2"/><circle cx="341" cy="780" r="2" fill="none" stroke="#888"/>
<path d="M362 789H367M371 789H376M365 783L367 786M373 783L371 786M365 795L367 792M373 795L371 792" stroke="#ccc" stroke-width="1.500"/>
<path d="M390 789H402" stroke="#777" stroke-width="2"/><rect x="387" y="785.500" width="9" height="7" rx="3" fill="none" stroke="#777" stroke-width="1.700"/><rect x="395" y="785.500" width="9" height="7" rx="3" fill="none" stroke="#777" stroke-width="1.700"/>
<rect x="418" y="782" width="14" height="13" fill="#cfe5f3" stroke="#555"/><path d="M419 791L423 787L427 790L431 787V794H419Z" fill="#1c6c9e"/>
<text x="446" y="785" font-family="Liberation Sans" font-size="7" fill="#333">abc</text><path d="M448 792L451 796L458 787" fill="none" stroke="#1ca51c" stroke-width="2.500"/>
<rect x="473" y="782" width="15" height="13" fill="#cce3f1" stroke="#555"/><path d="M473 786H488" stroke="#555"/><rect x="474" y="783" width="13" height="3" fill="#f5f5f5"/>
<rect x="501" y="782" width="15" height="13" fill="#fff" stroke="#555"/><rect x="511" y="783" width="4" height="11" fill="#8ab"/><path d="M503 786H509" stroke="#999"/>
</svg>

<!-- page scrollbar -->
<div class="a" style="left:1904px;top:5px;width:16px;height:950px;background:#f1f1f1"></div>
<div class="a" style="left:1904px;top:22px;width:16px;height:694px;background:#bdbdbd"></div>
<svg width="1920" height="995"><path d="M1909 16h6l-3-4z" fill="#aaa"/></svg>

<!-- tooltip -->
<div class="a" style="left:275px;top:936px;width:88px;height:19px;background:#fff;border:1px solid #777;font-size:11.500px;line-height:17px;text-align:center;color:#555;z-index:3;white-space:nowrap">Mozilla Firefox</div>

<!-- taskbar -->
<div class="a" style="left:0;top:955px;width:1920px;height:40px;background:#1b1b1b"></div>
<div class="a" style="left:0;top:992px;width:1920px;height:3px;background:#0c0c0c"></div>
<div class="a" style="left:245px;top:955px;width:49px;height:40px;background:#454545"></div>
<div class="a" style="left:294px;top:955px;width:48px;height:37px;background:#363636"></div>
<div class="a" style="left:200px;top:992px;width:40px;height:3px;background:#4eb4e8"></div>
<div class="a" style="left:245px;top:992px;width:49px;height:3px;background:#4eb4e8"></div>
<div class="a" style="left:935px;top:992px;width:40px;height:3px;background:#4eb4e8"></div>
<div class="t gh" style="left:10px;top:972px">Bekijk website</div>
<div class="t gh" style="left:150px;top:972px">beheerders</div>
<div class="t gh" style="left:254px;top:972px">administrator</div>
<div class="t gh" style="left:367px;top:972px">berichten</div>
<div class="t gh" style="left:465px;top:972px">Uitloggen</div>
<div class="t gh" style="left:1665px;top:970px;font-size:13px">Joomla! 3.7.3 — © 2017 Jouw Naambord</div>
<div class="t" style="left:1862px;top:957px;font-size:12px;color:#ddd;width:40px;text-align:center">09:08</div>
<div class="t" style="left:1853px;top:975px;font-size:12px;color:#ddd;width:58px;text-align:center">21-7-2017</div>
<svg width="1920" height="995">
<g fill="#fff"><path d="M14 969L22 968V974.500H14ZM23 967.500L32 966V974.500H23ZM14 975.500H22V982L14 981ZM23 975.500H32V984L23 982.500Z"/></g>
<circle cx="75" cy="971" r="6" fill="none" stroke="#fff" stroke-width="1.400"/><path d="M71 976L65 983" stroke="#fff" stroke-width="1.600"/>
<rect x="114" y="966" width="11" height="17" fill="none" stroke="#fff" stroke-width="1.300"/><path d="M110 969V980M129 969V980" stroke="#fff" stroke-width="1.300"/>
<text x="171" y="986" font-size="34" font-weight="bold" fill="#1a7fd8" text-anchor="middle" font-family="Liberation Sans">e</text>
<rect x="208" y="964" width="21" height="20" rx="2" fill="#f3b23d"/><rect x="214" y="962" width="15" height="14" fill="#fde3a0"/><circle cx="219" cy="976" r="5" fill="#e58f1a"/>
<circle cx="268" cy="974" r="11" fill="#db4437"/><path d="M268 974L258 968A11 11 0 0 0 263 984Z" fill="#0f9d58"/><path d="M268 974L279 971A11 11 0 0 1 263.500 984.500Z" fill="#f4b400"/><circle cx="268" cy="974" r="5" fill="#4285f4" stroke="#fff" stroke-width="1.500"/>
<circle cx="317" cy="974" r="11" fill="#f27a1a"/><circle cx="318" cy="975" r="6" fill="#2a4d9f"/><path d="M307 974C309 964 318 962 325 965C320 964 316 967 315 972C310 972 308 973 307 974Z" fill="#f9c22e"/>
<path d="M358 983L363 963L374 966L371 985Z" fill="#7fd6e8"/><path d="M358 983L361 973L372 978L371 985Z" fill="#2a9fb5"/>
<path d="M405 964H425V984H405Z" fill="#f6d66d"/><path d="M405 964H425V970H405Z" fill="#fbe9a5"/><rect x="410" y="975" width="10" height="8" fill="#1a9ed9"/>
<rect x="456" y="963" width="18" height="22" fill="#fff"/><rect x="458" y="965" width="14" height="4" fill="#111"/><path d="M459 973h3M464 973h3M469 973h2M459 977h3M464 977h3M469 977h2M459 981h3M464 981h3M469 981h2" stroke="#111" stroke-width="2"/>
<rect x="504" y="963" width="20" height="22" fill="#f4f4f4"/><path d="M507 982C511 976 514 970 514 966C515 972 518 976 522 977C517 977 511 979 507 982Z" fill="none" stroke="#d5382b" stroke-width="1.600"/>
<path d="M563 985C552 977 551 970 553 966C556 962 561 963 563 967C565 963 570 962 572 966C575 970 574 977 563 985Z" fill="#f06a78"/><circle cx="567" cy="978" r="5" fill="#d3dbe8"/>
<path d="M621 963L603 975L612 976L616 986Z" fill="#c22"/><path d="M621 963L612 976L616 986Z" fill="#999"/>
<rect x="650" y="965" width="21" height="19" fill="#ddd"/><path d="M656 982L666 966" stroke="#666"/>
<rect x="698" y="963" width="12" height="22" rx="2" fill="#0e0e0e" stroke="#666"/><rect x="701" y="970" width="6" height="7" fill="#2a84d8"/>
<circle cx="758" cy="974" r="11" fill="#e91e8c"/><rect x="752" y="968" width="12" height="12" fill="#222"/><text x="758" y="978" font-size="10" fill="#fff" text-anchor="middle">M</text>
<rect x="796" y="962" width="22" height="24" fill="#c1272d"/><text x="807" y="982" font-size="17" font-weight="bold" fill="#fff" text-anchor="middle" font-family="Liberation Sans" font-style="italic">Fz</text>
<path d="M846 963H868V985H856Z" fill="#4a5bd8"/><text x="857" y="980" font-size="14" font-weight="bold" fill="#fff" text-anchor="middle" font-family="Liberation Serif">FV</text>
<circle cx="906" cy="974" r="11" fill="#f4f0f4"/><circle cx="906" cy="974" r="6" fill="none" stroke="#e85da0" stroke-width="1.500"/><path d="M903 979V970L909 968V977" fill="none" stroke="#d04ab0" stroke-width="1.600"/>
<rect x="945" y="963" width="20" height="22" fill="#0a8fe0"/><text x="955" y="979" font-size="13" font-weight="bold" fill="#031a30" text-anchor="middle" font-family="Liberation Sans">Ps</text>
<path d="M1729 977L1734.500 971L1740 977" fill="none" stroke="#eee" stroke-width="1.400"/>
<g fill="#eee"><circle cx="1756" cy="969" r="2.500"/><circle cx="1762" cy="969" r="2.500"/><circle cx="1756" cy="975" r="2.500"/><circle cx="1762" cy="975" r="2.500"/></g><circle cx="1763" cy="980" r="4.500" fill="#1a9e3f"/>
<rect x="1776" y="970" width="14" height="11" fill="none" stroke="#eee"/><path d="M1783 981V985M1779 985H1787" stroke="#eee"/>
<path d="M1801 973H1804L1808 969V981L1804 977H1801Z" fill="none" stroke="#eee"/><path d="M1811 971C1813 973 1813 977 1811 979M1814 969C1817 972 1817 978 1814 981" fill="none" stroke="#eee"/>
<path d="M1832 984C1834 976 1838 969 1843 968C1844 974 1840 979 1836 979C1835 981 1834 983 1832 984Z" fill="none" stroke="#eee" stroke-width="1.200"/>
</svg>
</div></body></html>
